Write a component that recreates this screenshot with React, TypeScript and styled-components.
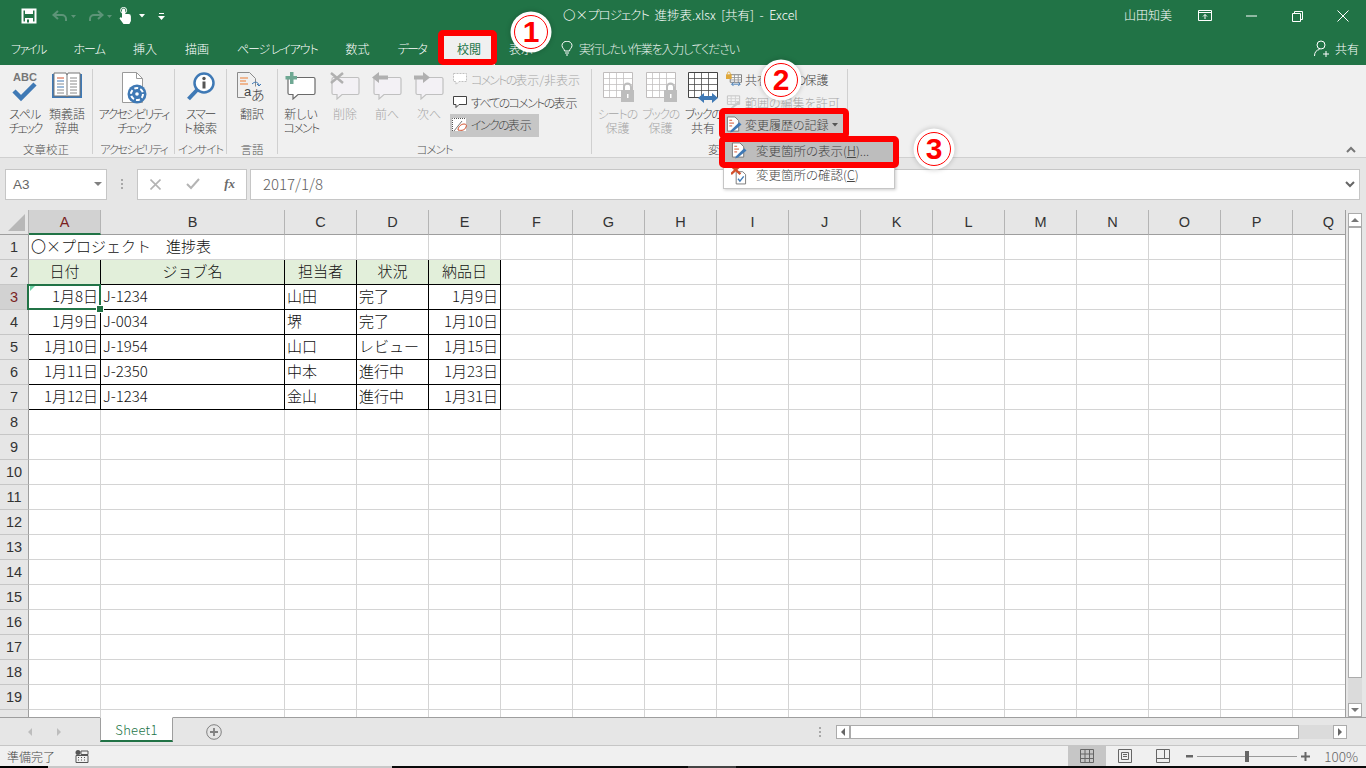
import React from 'react';
import styled, { createGlobalStyle } from 'styled-components';

const UI_FONT = '"Noto Sans CJK JP", "Noto Sans", sans-serif';

const GlobalStyle = createGlobalStyle`
  html, body {
    margin: 0;
    padding: 0;
    overflow: hidden;
    background: #f0f0f0;
  }
`;

const Window = styled.div`
  position: relative;
  display: flex;
  flex-direction: column;
  width: 1366px;
  height: 768px;
  overflow: hidden;
  font-family: ${UI_FONT};
  font-feature-settings: 'palt';
  font-weight: 300;
  font-size: 12px;
  color: #444;
`;

/* kana in the reference font is much narrower, this tightens a run of it */
const Fit = styled.span<{ $ls: number }>`
  letter-spacing: ${(p) => p.$ls}px;
`;

/* title bar */
const TitleBar = styled.div`
  display: flex;
  align-items: center;
  height: 32px;
  flex: none;
  background: #217346;
  color: #fff;
`;

const QuickAccess = styled.div`
  display: flex;
  align-items: center;
  padding-left: 21px;
  width: 563px;
  box-sizing: border-box;
`;

const QuickSlot = styled.span<{ $w: number }>`
  display: flex;
  align-items: center;
  width: ${(p) => p.$w}px;
`;

const TitleText = styled.div`
  flex: 1;
  padding-bottom: 3px;
  font-size: 12.5px;
  white-space: pre;
`;

const UserName = styled.div`
  padding-bottom: 3px;
  font-size: 12px;
  margin-right: 10px;
`;

const WinButton = styled.div`
  width: 46px;
  height: 32px;
  display: flex;
  align-items: center;
  justify-content: center;
`;

/* tabs */
const TabRow = styled.div`
  display: flex;
  align-items: center;
  height: 33px;
  flex: none;
  background: #217346;
  color: #fff;
  padding-left: 11px;
  gap: 28px;
`;

const Tab = styled.div<{ $active?: boolean; $ls?: number }>`
  line-height: 33px;
  white-space: nowrap;
  font-size: 12px;
  letter-spacing: ${(p) => p.$ls ?? 0}px;
  color: ${(p) => (p.$active ? '#217346' : '#fff')};
  ${(p) => p.$active && 'background: #f0f0f0; padding: 0 14px; margin: 0 -14px 0 -11px; font-weight: 400;'}
`;

const TellMe = styled.div`
  display: flex;
  align-items: center;
  gap: 6px;
  flex: 1;
  color: #e9f1ec;
  letter-spacing: -1.2px;
`;

const ShareButton = styled.div`
  display: flex;
  align-items: center;
  gap: 5px;
  padding-right: 7px;
`;

/* ribbon */
const Ribbon = styled.div`
  position: relative;
  display: flex;
  height: 93px;
  flex: none;
  background: #f0f0f0;
  border-bottom: 1px solid #d0d0d0;
  box-sizing: border-box;
`;

const Group = styled.div<{ $w: number }>`
  display: flex;
  flex-direction: column;
  width: ${(p) => p.$w}px;
  flex: none;
  height: 85px;
  margin-top: 4px;
  border-right: 1px solid #d0d0d0;
  box-sizing: border-box;
`;

const GroupBody = styled.div<{ $pad?: number }>`
  height: 71px;
  flex: none;
  display: flex;
  justify-content: ${(p) => (p.$pad !== undefined ? 'flex-start' : 'center')};
  padding-left: ${(p) => p.$pad ?? 0}px;
`;

const GroupLabel = styled.div`
  height: 14px;
  line-height: 18px;
  text-align: center;
  color: #555;
  font-size: 11.5px;
  white-space: nowrap;
`;

const BigButton = styled.div<{ $w: number; $off?: boolean }>`
  display: flex;
  flex-direction: column;
  align-items: center;
  width: ${(p) => p.$w}px;
  flex: none;
  color: ${(p) => (p.$off ? '#a6a6a6' : '#444')};
`;

const BigLabel = styled.div`
  font-size: 12px;
  line-height: 14px;
  text-align: center;
  white-space: pre;
`;

const IconSlot = styled.div`
  height: 38px;
  padding-top: 3px;
  display: flex;
  align-items: flex-start;
  justify-content: center;
  box-sizing: border-box;
  flex: none;
`;

const SmallColumn = styled.div`
  display: flex;
  flex-direction: column;
  align-items: flex-start;
  gap: 1px;
  flex: none;
`;

const SmallButton = styled.div<{ $off?: boolean; $on?: boolean }>`
  display: flex;
  align-items: center;
  gap: 3px;
  height: ${(p) => (p.$on ? 23 : 22)}px;
  ${(p) => p.$on && 'margin-top: -1px;'}
  padding: 0 7px 2px 2px;
  box-sizing: border-box;
  color: ${(p) => (p.$off ? '#a6a6a6' : '#444')};
  background: ${(p) => (p.$on ? '#c6c6c6' : 'transparent')};
  white-space: nowrap;
  font-size: 12px;
`;

const Collapse = styled.div`
  position: absolute;
  right: 10px;
  bottom: 4px;
  line-height: 0;
`;

/* formula bar */
const FormulaBar = styled.div`
  display: flex;
  align-items: center;
  height: 52px;
  flex: none;
  background: #e6e6e6;
  padding: 0 6px 0 5px;
  box-sizing: border-box;
`;

const FieldBox = styled.div<{ $w?: number; $ml?: number }>`
  display: flex;
  align-items: center;
  height: 31px;
  ${(p) => (p.$w ? `width: ${p.$w}px; flex: none;` : 'flex: 1;')}
  margin-left: ${(p) => p.$ml ?? 0}px;
  padding-right: 4px;
  background: #fff;
  border: 1px solid #c6c6c6;
  box-sizing: border-box;
  color: #666;
`;

const NameText = styled.div`
  flex: 1;
  padding-left: 7px;
  font-size: 13.5px;
  font-family: 'Liberation Sans', sans-serif;
`;

const FormulaText = styled.div`
  flex: 1;
  padding: 0 0 2px 12px;
  font-size: 15px;
  color: #5f5f5f;
`;

const Dots = styled.div`
  width: 30px;
  flex: none;
  display: flex;
  flex-direction: column;
  align-items: center;
  gap: 2px;
`;

const Dot = styled.i`
  width: 2px;
  height: 2px;
  background: #a8a8a8;
`;

const FxButtons = styled.div`
  display: flex;
  justify-content: space-between;
  align-items: center;
  flex: 1;
  padding: 0 7px 0 12px;
`;

const FxLabel = styled.span`
  font-family: 'Liberation Serif', serif;
  font-style: italic;
  font-weight: 700;
  font-size: 13px;
  color: #6a6a6a;
`;

/* sheet */
const SheetArea = styled.div`
  display: flex;
  height: 507px;
  flex: none;
  background: #e6e6e6;
  overflow: hidden;
`;

const GridClip = styled.div`
  width: 1346px;
  height: 507px;
  overflow: hidden;
  border-right: 1px solid #9e9e9e;
  box-sizing: border-box;
  flex: none;
`;

const Grid = styled.div`
  display: grid;
  grid-template-columns: 29px 72px 184px repeat(15, 72px);
  grid-auto-rows: 25px;
  width: max-content;
  background: #fff;
`;

const ColHead = styled.div<{ $sel?: boolean }>`
  display: flex;
  align-items: center;
  justify-content: center;
  background: ${(p) => (p.$sel ? '#d2d2d2' : '#e6e6e6')};
  border-bottom: ${(p) => (p.$sel ? '2px solid #217346' : '1px solid #9e9e9e')};
  border-right: 1px solid #b4b4b4;
  box-sizing: border-box;
  color: ${(p) => (p.$sel ? '#7a1f1f' : '#333')};
  font-family: 'Liberation Sans', sans-serif;
  font-size: 14.5px;
`;

const Corner = styled.div`
  background: #e6e6e6;
  border-bottom: 1px solid #9e9e9e;
  border-right: 1px solid #b4b4b4;
  box-sizing: border-box;
  position: relative;
`;

const CornerMark = styled.i`
  position: absolute;
  right: 3px;
  bottom: 3px;
  width: 0;
  height: 0;
  border-style: solid;
  border-width: 0 0 17px 17px;
  border-color: transparent transparent #b8b8b8 transparent;
`;

const RowHead = styled.div<{ $sel?: boolean }>`
  display: flex;
  align-items: center;
  justify-content: center;
  background: ${(p) => (p.$sel ? '#d2d2d2' : '#e6e6e6')};
  border-right: 1px solid #9e9e9e;
  border-bottom: 1px solid #c6c6c6;
  box-sizing: border-box;
  color: ${(p) => (p.$sel ? '#7a1f1f' : '#333')};
  font-family: 'Liberation Sans', sans-serif;
  font-size: 14.5px;
`;

const Cell = styled.div<{ $boxed?: boolean; $head?: boolean; $align?: string; $span?: number }>`
  position: relative;
  display: flex;
  align-items: center;
  justify-content: ${(p) => p.$align ?? 'flex-start'};
  grid-column: span ${(p) => p.$span ?? 1};
  padding: 0 2px 3px;
  box-sizing: border-box;
  white-space: nowrap;
  color: #111;
  font-size: 15px;
  font-feature-settings: normal;
  background: ${(p) => (p.$head ? '#e2efda' : '#fff')};
  border-right: 1px solid ${(p) => (p.$boxed ? '#000' : '#d4d4d4')};
  border-bottom: 1px solid ${(p) => (p.$boxed ? '#000' : '#d4d4d4')};
`;

const Cursor = styled.i`
  position: absolute;
  inset: -1px -1px -1px -2px;
  border: 2px solid #217346;
  pointer-events: none;
`;

const CursorHandle = styled.i`
  position: absolute;
  right: -4px;
  bottom: -4px;
  width: 6px;
  height: 6px;
  background: #217346;
  border: 1px solid #fff;
  z-index: 1;
`;

const ErrorMark = styled.i`
  position: absolute;
  left: 1px;
  top: 1px;
  border-style: solid;
  border-width: 5px 5px 0 0;
  border-color: #6fd3a6 transparent transparent transparent;
`;

const VScroll = styled.div`
  width: 14px;
  margin: 3px 0 0 2px;
  display: flex;
  flex-direction: column;
  flex: none;
  height: 504px;
  background: #dbdbdb;
`;

const ScrollBtn = styled.div`
  width: 14px;
  height: 14px;
  flex: none;
  display: flex;
  align-items: center;
  justify-content: center;
  background: #fff;
  border: 1px solid #ababab;
  box-sizing: border-box;
`;

const VThumb = styled.div`
  height: 451px;
  flex: none;
  background: #fff;
  border: 1px solid #ababab;
  box-sizing: border-box;
`;

const Spacer = styled.div`
  flex: 1;
`;

/* sheet tabs */
const TabBar = styled.div`
  display: flex;
  align-items: center;
  height: 29px;
  flex: none;
  background: #e6e6e6;
  border-top: 1px solid #9e9e9e;
  border-bottom: 1px solid #c6c6c6;
  box-sizing: border-box;
`;

const NavArrows = styled.div`
  display: flex;
  width: 100px;
  flex: none;
  padding-left: 26px;
  gap: 21px;
  box-sizing: border-box;
`;

const SheetTab = styled.div`
  width: 73px;
  height: 25px;
  margin-top: -1px;
  align-self: flex-start;
  flex: none;
  display: flex;
  align-items: center;
  justify-content: center;
  background: #fff;
  border: 1px solid #9e9e9e;
  border-top-color: #fff;
  border-bottom: 2px solid #217346;
  box-sizing: border-box;
  color: #217346;
  font-size: 13px;
  letter-spacing: 0.3px;
  font-feature-settings: normal;
`;

const AddSheet = styled.div`
  margin-left: 33px;
  line-height: 0;
`;

const TabDots = styled.div`
  margin-left: auto;
  width: 16px;
  display: flex;
  flex-direction: column;
  align-items: center;
  gap: 2px;
`;

const HScroll = styled.div`
  display: flex;
  width: 511px;
  height: 14px;
  margin: 0 19px 0 8px;
  flex: none;
  background: #dbdbdb;
`;

const HThumb = styled.div`
  width: 449px;
  flex: none;
  background: #fff;
  border: 1px solid #ababab;
  box-sizing: border-box;
`;

/* status bar */
const StatusBar = styled.div`
  display: flex;
  align-items: center;
  height: 20px;
  flex: none;
  background: #f0f0f0;
  padding-left: 7px;
  color: #444;
`;

const StatusIcon = styled.div`
  margin-left: 20px;
  line-height: 0;
`;

const ViewButtons = styled.div`
  display: flex;
  align-items: center;
  height: 100%;
  margin-left: auto;
`;

const ViewButton = styled.div<{ $on?: boolean }>`
  width: 38px;
  height: 100%;
  display: flex;
  align-items: center;
  justify-content: center;
  background: ${(p) => (p.$on ? '#c6c6c6' : 'transparent')};
`;

const Zoomer = styled.div`
  display: flex;
  align-items: center;
  margin-left: 4px;
  gap: 2px;
`;

const Slider = styled.div`
  position: relative;
  width: 100px;
  height: 1px;
  margin: 0 2px;
  background: #9a9a9a;
`;

const SliderThumb = styled.i`
  position: absolute;
  left: 48px;
  top: -5px;
  width: 4px;
  height: 11px;
  background: #666;
`;

const ZoomText = styled.div`
  width: 56px;
  padding-right: 8px;
  box-sizing: border-box;
  text-align: right;
  color: #666;
  font-size: 13.5px;
  font-feature-settings: normal;
`;

const BottomEdge = styled.div`
  display: flex;
  height: 2px;
  flex: none;
`;

const EdgePiece = styled.div<{ $w: number; $c: string }>`
  width: ${(p) => p.$w}px;
  background: ${(p) => p.$c};
`;

/* dropdown and annotations, laid over the window */
const Menu = styled.div`
  position: absolute;
  left: 723px;
  top: 137px;
  width: 172px;
  height: 52px;
  padding-top: 2px;
  box-sizing: border-box;
  background: #fff;
  border: 1px solid #c6c6c6;
  box-shadow: 1px 1px 3px rgba(0, 0, 0, 0.2);
  z-index: 2;
`;

const MenuItem = styled.div<{ $on?: boolean }>`
  display: flex;
  align-items: center;
  height: 23px;
  margin-bottom: 1px;
  padding: 0 0 2px 7px;
  gap: 9px;
  box-sizing: border-box;
  color: #444;
  background: ${(p) => (p.$on ? '#bdbdbd' : 'transparent')};
  white-space: nowrap;
  font-size: 12.5px;
`;

const MenuKey = styled.span`
  text-decoration: underline;
`;

const RedBox = styled.div<{ $l: number; $t: number; $w: number; $h: number }>`
  position: absolute;
  left: ${(p) => p.$l}px;
  top: ${(p) => p.$t}px;
  width: ${(p) => p.$w}px;
  height: ${(p) => p.$h}px;
  border: 6px solid #f00;
  border-radius: 5px;
  box-sizing: border-box;
  z-index: 3;
`;

const Callout = styled.div<{ $x: number; $y: number }>`
  position: absolute;
  left: ${(p) => p.$x - 17}px;
  top: ${(p) => p.$y - 17}px;
  width: 34px;
  height: 34px;
  display: flex;
  align-items: center;
  justify-content: center;
  box-sizing: border-box;
  border-radius: 50%;
  background: #fff;
  border: 1.5px solid #f00;
  box-shadow: 0 0 0 3.5px #fff, 0 0 5px 4px rgba(0, 0, 0, 0.18);
  color: #f00;
  font-family: 'Liberation Sans', sans-serif;
  font-weight: 700;
  font-size: 30px;
  line-height: 1;
  z-index: 4;
`;

/* icons */
const Save = () => (
  <svg width="16" height="16" viewBox="0 0 16 16">
    <path d="M1.5 1.5h13v13h-13z" fill="none" stroke="#fff" strokeWidth="2" />
    <path d="M4 1v5h8V1zM4 10h8v5H4z" fill="#fff" />
    <path d="M6 11.5h2v3H6z" fill="#217346" />
  </svg>
);

const Undo = ({ flip }: { flip?: boolean }) => (
  <svg width="26" height="14" viewBox="0 0 26 14">
    <g transform={flip ? 'translate(18 0) scale(-1 1)' : undefined}>
      <path d="M7 2 2.500 6 7 10M3 6h8a4 4 0 0 1 4 4v2" fill="none" stroke="#5d9478" strokeWidth="2" />
    </g>
    <path d="M20 6h5l-2.500 3z" fill="#5d9478" />
  </svg>
);

const Touch = () => (
  <svg width="14" height="18" viewBox="0 0 14 18">
    <path d="M4 8V3a1.600 1.600 0 0 1 3.200 0v4h3.300a2.400 2.400 0 0 1 2.400 2.400V14l-1.500 3H5.500L1.500 11.500 2.800 10 4 11z" fill="#fff" />
    <circle cx="5.600" cy="3.400" r="3" fill="none" stroke="#fff" />
  </svg>
);

const Caret = ({ c = '#fff' }: { c?: string }) => (
  <svg width="6" height="4" viewBox="0 0 6 4">
    <path d="M0 0h6L3 3.500z" fill={c} />
  </svg>
);

const Customize = () => (
  <svg width="7" height="7" viewBox="0 0 7 7">
    <path d="M1 0h5v1H1zM0 3h7L3.500 7z" fill="#fff" />
  </svg>
);

const RibbonDisplay = () => (
  <svg width="14" height="12" viewBox="0 0 14 12">
    <path d="M.5.5h13v10H.5zM.5 2.500h13M7 9V4.500M5 6.500l2-2 2 2" fill="none" stroke="#fff" />
  </svg>
);

const Minimize = () => (
  <svg width="11" height="2" viewBox="0 0 11 2">
    <path d="M0 1h11" stroke="#fff" />
  </svg>
);

const Restore = () => (
  <svg width="11" height="11" viewBox="0 0 11 11">
    <path d="M.5 2.500h8v8h-8zM2.500 2.500v-2h8v8h-2" fill="none" stroke="#fff" />
  </svg>
);

const Close = () => (
  <svg width="12" height="12" viewBox="0 0 12 12">
    <path d="M.5.5l11 11M11.500.5l-11 11" stroke="#fff" />
  </svg>
);

const Bulb = () => (
  <svg width="12" height="15" viewBox="0 0 12 15">
    <path d="M3.500 10c0-2-2.500-3-2.500-5.500a5 4.300 0 0 1 10 0C11 7 8.500 8 8.500 10zM4 12h4M5 14h2" fill="none" stroke="#fff" />
  </svg>
);

const Person = () => (
  <svg width="16" height="17" viewBox="0 0 16 17">
    <circle cx="7" cy="5" r="4" fill="none" stroke="#fff" />
    <path d="M.5 16c0-4 2-6 5-6.500M9 14h6M12 11v6" fill="none" stroke="#fff" />
  </svg>
);

const SpellIcon = () => (
  <svg width="28" height="34" viewBox="0 0 28 34">
    <text x="14" y="9" textAnchor="middle" fontSize="11" fontWeight="700" fontFamily="Liberation Sans" fill="#777">ABC</text>
    <path d="M3 19l7 7L24 12" fill="none" stroke="#3f79b5" strokeWidth="4.500" />
  </svg>
);

const BookIcon = () => (
  <svg width="32" height="28" viewBox="0 0 32 28">
    <path d="M1 2h30v24H1z" fill="#3f79b5" />
    <path d="M3 1h12l1 2 1-2h12v23H17l-1 1-1-1H3z" fill="#fff" stroke="#777" />
    <path d="M16 3v21" stroke="#777" />
    <path d="M6 6h7" stroke="#d2502d" />
    <path d="M6 9h7M6 15h7" stroke="#3f79b5" />
    <path d="M6 12h7M6 18h7M6 21h7M19 6h7M19 9h7M19 12h7M19 15h7M19 18h7M19 21h7" stroke="#8a8a8a" />
  </svg>
);

const AccessIcon = () => (
  <svg width="30" height="32" viewBox="0 0 30 32">
    <path d="M3.500.5h14l6 6v24h-20z" fill="#fff" stroke="#9a9a9a" />
    <path d="M17.500.5v6h6" fill="none" stroke="#9a9a9a" />
    <circle cx="18" cy="22" r="9.500" fill="#3f79b5" />
    <circle cx="18" cy="22" r="6" fill="none" stroke="#fff" strokeWidth="2" strokeDasharray="4 2.200" />
    <circle cx="18" cy="22" r="1.800" fill="#fff" />
  </svg>
);

const SmartIcon = () => (
  <svg width="30" height="30" viewBox="0 0 30 30">
    <circle cx="18" cy="11" r="9.500" fill="#fff" stroke="#3f79b5" strokeWidth="2.500" />
    <path d="M11 18 2.500 27" stroke="#3f79b5" strokeWidth="4" />
    <path d="M16.500 9.500h3v7h-3z" fill="#555" />
    <circle cx="18" cy="6.500" r="1.700" fill="#555" />
  </svg>
);

const TranslateIcon = () => (
  <svg width="32" height="33" viewBox="0 0 32 33">
    <path d="M1.500.5h12l6 6v8M1.500.5v25h8" fill="none" stroke="#8a8a8a" />
    <path d="M4 6h8M4 9h6M4 12h8" stroke="#ed7d31" />
    <path d="M16 12c3-3 6-2 7 1M21 12l2 2 2-2" fill="none" stroke="#3f79b5" />
    <text x="8" y="24" fontSize="13" fontFamily="Liberation Sans" fill="#444">a</text>
    <text x="15" y="28" fontSize="14" fontFamily="Noto Sans CJK JP" fill="#444">あ</text>
  </svg>
);

const Bubble = ({ off }: { off?: boolean }) => (
  <path
    d="M4.500 5.500h24a1.500 1.500 0 0 1 1.500 1.500v14a1.500 1.500 0 0 1-1.500 1.500H13l-5 4.500v-4.500H4.500A1.500 1.500 0 0 1 3 21V7a1.500 1.500 0 0 1 1.500-1.500z"
    fill={off ? '#f3f1f5' : '#fff'}
    stroke={off ? '#c0c0c0' : '#6a6a6a'}
    strokeWidth="1.200"
  />
);

const NewComment = () => (
  <svg width="32" height="28" viewBox="0 0 32 28">
    <Bubble />
    <path d="M5 0h3.500v4H12v3.500H8.500V12H5V7.500H.5V4H5z" fill="#6fa893" />
  </svg>
);

const DeleteComment = () => (
  <svg width="32" height="28" viewBox="0 0 32 28">
    <Bubble off />
    <path d="M2 1l12 10M14 1 2 11" stroke="#b0b0b0" strokeWidth="2.500" />
  </svg>
);

const PrevComment = () => (
  <svg width="32" height="28" viewBox="0 0 32 28">
    <Bubble off />
    <path d="M8 0 1 5.500 8 11V7.500h9v-4H8z" fill="#b0b0b0" />
  </svg>
);

const NextComment = () => (
  <svg width="32" height="28" viewBox="0 0 32 28">
    <Bubble off />
    <path d="M10 0l7 5.500L10 11V7.500H1v-4h9z" fill="#b0b0b0" />
  </svg>
);

const SmallBubble = ({ off }: { off?: boolean }) => (
  <svg width="16" height="14" viewBox="0 0 16 14">
    <path
      d="M1.500 1.500h13v8H7L4 12.500V9.500H1.500z"
      fill="#fff"
      stroke={off ? '#c0c0c0' : '#444'}
      strokeDasharray={off ? '2 1' : undefined}
    />
  </svg>
);

const InkIcon = () => (
  <svg width="16" height="14" viewBox="0 0 16 14">
    <path d="M0 0h14v13H0z" fill="#fff" />
    <path d="M.5 13V.5H14" fill="none" stroke="#555" strokeDasharray="1 1" />
    <path d="M2 13 10 3" stroke="#777" />
    <path d="M6 12c0-3 3-6 6-6 2 0 3 1 2 3-1 3-4 4-8 3z" fill="none" stroke="#d2502d" />
  </svg>
);

const SheetIcon = ({ off }: { off?: boolean }) => {
  const c = off ? '#c0bdbd' : '#444';
  return (
    <svg width="36" height="31" viewBox="0 0 36 31">
      <path d="M3.500.5h29v25h-29z" fill="#fff" stroke={c} />
      <path
        d="M3.500 6.500h29M3.500 12.500h29M3.500 18.500h29M9.500.5v25M16.500.5v25M23.500.5v25"
        fill="none"
        stroke={c}
        opacity=".75"
      />
      {off ? (
        <g>
          <path d="M21 18h13v12H21z" fill="#bdbdbd" />
          <path d="M24 18v-3a3.500 3.500 0 0 1 7 0v3" fill="none" stroke="#bdbdbd" strokeWidth="2" />
          <path d="M27 22h1.500v4H27z" fill="#fff" />
        </g>
      ) : (
        <path d="M13 26l6-5v3h8v-3l6 5-6 5v-3h-8v3z" fill="#3f79b5" />
      )}
    </svg>
  );
};

const ShareProtect = () => (
  <svg width="16" height="16" viewBox="0 0 17 16">
    <path d="M4.500 3.500h12v8h-12z" fill="#fff" stroke="#777" />
    <path d="M4.500 6.500h12M4.500 9h12M9 3.500v8M13 3.500v8" stroke="#999" />
    <path d="M0 3h6v5H0z" fill="#e0a83a" />
    <path d="M1.500 3V2a1.500 1.500 0 0 1 3 0v1" fill="none" stroke="#e0a83a" />
    <path d="M6 13.500h9M6 13.500l2-2M6 13.500l2 2M15 13.500l-2-2M15 13.500l-2 2" fill="none" stroke="#3f79b5" />
  </svg>
);

const RangeIcon = () => (
  <svg width="16" height="16" viewBox="0 0 17 16">
    <path d="M1.500 1.500h13v9h-13z" fill="#f4f4f4" stroke="#c0c0c0" />
    <path d="M1.500 4.500h13M1.500 7.500h13M5.500 1.500v9M10 1.500v9" stroke="#d0d0d0" />
    <path d="M5 14l8-7 2 2-8 6z" fill="#c8c8c8" />
  </svg>
);

const TrackIcon = () => (
  <svg width="16" height="17" viewBox="0 0 17 17">
    <path d="M1.500.5h8l4 4v11h-12z" fill="#fff" stroke="#777" />
    <path d="M3.500 4h3M3.500 7h5M3.500 10h3" stroke="#d2502d" />
    <path d="M5 15l9-9 2.500 2.500-9 7.500-3 1z" fill="#3f79b5" />
  </svg>
);

const ReviewIcon = () => (
  <svg width="16" height="20" viewBox="0 0 17 20">
    <path d="M5.500 6.500h7l3 3v10h-10z" fill="#fff" stroke="#777" />
    <path d="M7.500 14l2 2.500 4-5" fill="none" stroke="#3f79b5" strokeWidth="1.500" />
    <path d="M0 0l10 9M10 0 0 9" stroke="#d2502d" strokeWidth="2.500" />
  </svg>
);

const ChevronUp = () => (
  <svg width="10" height="7" viewBox="0 0 10 7">
    <path d="M1 6l4-4 4 4" fill="none" stroke="#777" strokeWidth="2" />
  </svg>
);

const ChevronDown = () => (
  <svg width="10" height="7" viewBox="0 0 10 7">
    <path d="M1 1l4 4 4-4" fill="none" stroke="#666" strokeWidth="2" />
  </svg>
);

const Cross = () => (
  <svg width="11" height="11" viewBox="0 0 11 11">
    <path d="M.5.5l10 10M10.500.5l-10 10" stroke="#b4b4b4" strokeWidth="1.600" />
  </svg>
);

const Check = () => (
  <svg width="14" height="12" viewBox="0 0 14 12">
    <path d="M1 6l4 4 8-9" fill="none" stroke="#b4b4b4" strokeWidth="2" />
  </svg>
);

const Tri = ({ dir, c = '#777' }: { dir: 'u' | 'd' | 'l' | 'r'; c?: string }) => {
  const d = { u: 'M0 6 4 2l4 4z', d: 'M0 2h8L4 6z', l: 'M6 0v8L2 4z', r: 'M2 0v8l4-4z' }[dir];
  return (
    <svg width="8" height="8" viewBox="0 0 8 8">
      <path d={d} fill={c} />
    </svg>
  );
};

const PlusCircle = () => (
  <svg width="16" height="16" viewBox="0 0 16 16">
    <circle cx="8" cy="8" r="7.300" fill="none" stroke="#808080" />
    <path d="M8 4v8M4 8h8" stroke="#808080" strokeWidth="1.800" />
  </svg>
);

const MacroIcon = () => (
  <svg width="14" height="13" viewBox="0 0 14 13">
    <circle cx="3" cy="2.500" r="2.500" fill="#555" />
    <path d="M1 5.500h12v7H1zM6 1h7v3.500H6z" fill="none" stroke="#555" />
    <path d="M3 7.500h1M6 7.500h1M9 7.500h1M3 10h1M6 10h1M9 10h1" stroke="#555" />
  </svg>
);

const NormalView = () => (
  <svg width="14" height="14" viewBox="0 0 14 14">
    <path d="M.5.5h13v13H.5zM.5 5h13M.5 9.500h13M5 .5v13M9.500.5v13" fill="none" stroke="#666" />
  </svg>
);

const PageView = () => (
  <svg width="14" height="14" viewBox="0 0 14 14">
    <path d="M.5.5h13v13H.5zM3.500 3.500h7v7h-7zM5 5.500h4M5 7.500h4" fill="none" stroke="#666" />
  </svg>
);

const BreakView = () => (
  <svg width="14" height="14" viewBox="0 0 14 14">
    <path d="M.5.5h13v13H.5zM.5 9.500h13M8.500.5v9" fill="none" stroke="#666" />
  </svg>
);

const Minus = () => (
  <svg width="7" height="3" viewBox="0 0 7 3">
    <path d="M0 0h7v2.500H0z" fill="#666" />
  </svg>
);

const Plus = () => (
  <svg width="9" height="9" viewBox="0 0 9 9">
    <path d="M3.500 0H5.500v3.500H9v2H5.500V9h-2V5.500H0v-2h3.500z" fill="#666" />
  </svg>
);

/* sheet data */
const COLUMNS = 'ABCDEFGHIJKLMNOPQ'.split('');

type Align = 'flex-start' | 'center' | 'flex-end';
const TABLE_ALIGN: Align[] = ['flex-end', 'flex-start', 'flex-start', 'flex-start', 'flex-end'];

const TABLE_HEAD = ['日付', 'ジョブ名', '担当者', '状況', '納品日'];
const TABLE_ROWS = [
  ['1月8日', 'J-1234', '山田', '完了', '1月9日'],
  ['1月9日', 'J-0034', '堺', '完了', '1月10日'],
  ['1月10日', 'J-1954', '山口', 'レビュー', '1月15日'],
  ['1月11日', 'J-2350', '中本', '進行中', '1月23日'],
  ['1月12日', 'J-1234', '金山', '進行中', '1月31日'],
];

const renderCell = (row: number, col: number) => {
  const key = `${row}-${col}`;
  if (row === 1 && col === 0) {
    return <Cell key={key} $span={2}>〇×プロジェクト　進捗表</Cell>;
  }
  if (row === 1 && col === 1) return null;
  if (row === 2 && col < 5) {
    return (
      <Cell key={key} $boxed $head $align="center">
        {TABLE_HEAD[col]}
      </Cell>
    );
  }
  if (row >= 3 && row <= 7 && col < 5) {
    return (
      <Cell key={key} $boxed $align={TABLE_ALIGN[col]}>
        {TABLE_ROWS[row - 3][col]}
        {row === 3 && col === 0 && (
          <>
            <ErrorMark />
            <Cursor />
            <CursorHandle />
          </>
        )}
      </Cell>
    );
  }
  return <Cell key={key} />;
};

const renderRows = () => {
  const out: React.ReactNode[] = [];
  for (let row = 1; row <= 20; row++) {
    out.push(
      <RowHead key={`r${row}`} $sel={row === 3}>
        {row}
      </RowHead>
    );
    COLUMNS.forEach((_, col) => out.push(renderCell(row, col)));
  }
  return out;
};

function App() {
  return (
    <Window>
      <GlobalStyle />
      <TitleBar>
        <QuickAccess>
          <QuickSlot $w={30}><Save /></QuickSlot>
          <QuickSlot $w={36}><Undo /></QuickSlot>
          <QuickSlot $w={31}><Undo flip /></QuickSlot>
          <QuickSlot $w={21}><Touch /></QuickSlot>
          <QuickSlot $w={19}><Caret /></QuickSlot>
          <QuickSlot $w={10}><Customize /></QuickSlot>
        </QuickAccess>
        <TitleText>〇×<Fit $ls={-1}>プロジェクト</Fit>  進捗表.xlsx  [共有]  -  Excel</TitleText>
        <UserName>山田知美</UserName>
        <WinButton><RibbonDisplay /></WinButton>
        <WinButton><Minimize /></WinButton>
        <WinButton><Restore /></WinButton>
        <WinButton><Close /></WinButton>
      </TitleBar>

      <TabRow>
        <Tab $ls={-1.75}>ファイル</Tab>
        <Tab $ls={-1}>ホーム</Tab>
        <Tab>挿入</Tab>
        <Tab>描画</Tab>
        <Tab $ls={-1.1}>ページ レイアウト</Tab>
        <Tab>数式</Tab>
        <Tab $ls={-1.7}>データ</Tab>
        <Tab $active>校閲</Tab>
        <Tab>表示</Tab>
        <TellMe>
          <Bulb />
          <span>実行したい作業を入力してください</span>
        </TellMe>
        <ShareButton>
          <Person />
          <span>共有</span>
        </ShareButton>
      </TabRow>

      <Ribbon>
        <Group $w={93}>
          <GroupBody>
            <BigButton $w={42}>
              <IconSlot><SpellIcon /></IconSlot>
              <BigLabel><Fit $ls={-0.6}>スペル</Fit>{'\n'}<Fit $ls={-2.2}>チェック</Fit></BigLabel>
            </BigButton>
            <BigButton $w={42}>
              <IconSlot><BookIcon /></IconSlot>
              <BigLabel>{'類義語\n辞典'}</BigLabel>
            </BigButton>
          </GroupBody>
          <GroupLabel>文章校正</GroupLabel>
        </Group>
        <Group $w={82}>
          <GroupBody>
            <BigButton $w={78}>
              <IconSlot><AccessIcon /></IconSlot>
              <BigLabel><Fit $ls={-1.75}>アクセシビリティ</Fit>{'\n'}<Fit $ls={-2.2}>チェック</Fit></BigLabel>
            </BigButton>
          </GroupBody>
          <GroupLabel><Fit $ls={-1.75}>アクセシビリティ</Fit></GroupLabel>
        </Group>
        <Group $w={52}>
          <GroupBody>
            <BigButton $w={48}>
              <IconSlot><SmartIcon /></IconSlot>
              <BigLabel><Fit $ls={-1.3}>スマー</Fit>{'\n'}ト検索</BigLabel>
            </BigButton>
          </GroupBody>
          <GroupLabel><Fit $ls={-1}>インサイト</Fit></GroupLabel>
        </Group>
        <Group $w={51}>
          <GroupBody>
            <BigButton $w={48}>
              <IconSlot><TranslateIcon /></IconSlot>
              <BigLabel>翻訳</BigLabel>
            </BigButton>
          </GroupBody>
          <GroupLabel>言語</GroupLabel>
        </Group>
        <Group $w={314}>
          <GroupBody $pad={0}>
            <BigButton $w={46}>
              <IconSlot><NewComment /></IconSlot>
              <BigLabel>新しい{'\n'}<Fit $ls={-1.7}>コメント</Fit></BigLabel>
            </BigButton>
            <BigButton $w={42} $off>
              <IconSlot><DeleteComment /></IconSlot>
              <BigLabel>削除</BigLabel>
            </BigButton>
            <BigButton $w={42} $off>
              <IconSlot><PrevComment /></IconSlot>
              <BigLabel>前へ</BigLabel>
            </BigButton>
            <BigButton $w={42} $off>
              <IconSlot><NextComment /></IconSlot>
              <BigLabel>次へ</BigLabel>
            </BigButton>
            <SmallColumn>
              <SmallButton $off><SmallBubble off /><span><Fit $ls={-1.8}>コメントの</Fit>表示/非表示</span></SmallButton>
              <SmallButton><SmallBubble /><span><Fit $ls={-1.7}>すべてのコメントの</Fit>表示</span></SmallButton>
              <SmallButton $on><InkIcon /><span><Fit $ls={-1.7}>インクの</Fit>表示</span></SmallButton>
            </SmallColumn>
          </GroupBody>
          <GroupLabel><Fit $ls={-1}>コメント</Fit></GroupLabel>
        </Group>
        <Group $w={256}>
          <GroupBody $pad={4}>
            <BigButton $w={43} $off>
              <IconSlot><SheetIcon off /></IconSlot>
              <BigLabel><Fit $ls={-1}>シートの</Fit>{'\n'}保護</BigLabel>
            </BigButton>
            <BigButton $w={43} $off>
              <IconSlot><SheetIcon off /></IconSlot>
              <BigLabel><Fit $ls={-1.5}>ブックの</Fit>{'\n'}保護</BigLabel>
            </BigButton>
            <BigButton $w={42}>
              <IconSlot><SheetIcon /></IconSlot>
              <BigLabel><Fit $ls={-1.5}>ブックの</Fit>{'\n'}共有</BigLabel>
            </BigButton>
            <SmallColumn>
              <SmallButton><ShareProtect /><span>共有<Fit $ls={-1.7}>ブックの</Fit>保護</span></SmallButton>
              <SmallButton $off><RangeIcon /><span>範囲の編集を許可</span></SmallButton>
              <SmallButton $on><TrackIcon /><span>変更履歴の記録</span><Caret c="#555" /></SmallButton>
            </SmallColumn>
          </GroupBody>
          <GroupLabel>変更</GroupLabel>
        </Group>
        <Collapse><ChevronUp /></Collapse>
      </Ribbon>

      <FormulaBar>
        <FieldBox $w={102}>
          <NameText>A3</NameText>
          <Tri dir="d" c="#808080" />
        </FieldBox>
        <Dots><Dot /><Dot /><Dot /></Dots>
        <FieldBox $w={110}>
          <FxButtons>
            <Cross />
            <Check />
            <FxLabel>fx</FxLabel>
          </FxButtons>
        </FieldBox>
        <FieldBox $ml={3}>
          <FormulaText>2017/1/8</FormulaText>
          <ChevronDown />
        </FieldBox>
      </FormulaBar>

      <SheetArea>
        <GridClip>
          <Grid>
            <Corner><CornerMark /></Corner>
            {COLUMNS.map((c, i) => (
              <ColHead key={c} $sel={i === 0}>{c}</ColHead>
            ))}
            {renderRows()}
          </Grid>
        </GridClip>
        <VScroll>
          <ScrollBtn><Tri dir="u" /></ScrollBtn>
          <VThumb />
          <Spacer />
          <ScrollBtn><Tri dir="d" /></ScrollBtn>
        </VScroll>
      </SheetArea>

      <TabBar>
        <NavArrows>
          <Tri dir="l" c="#bdbdbd" />
          <Tri dir="r" c="#bdbdbd" />
        </NavArrows>
        <SheetTab>Sheet1</SheetTab>
        <AddSheet><PlusCircle /></AddSheet>
        <TabDots><Dot /><Dot /><Dot /></TabDots>
        <HScroll>
          <ScrollBtn><Tri dir="l" c="#666" /></ScrollBtn>
          <HThumb />
          <Spacer />
          <ScrollBtn><Tri dir="r" c="#666" /></ScrollBtn>
        </HScroll>
      </TabBar>

      <StatusBar>
        <span>準備完了</span>
        <StatusIcon><MacroIcon /></StatusIcon>
        <ViewButtons>
          <ViewButton $on><NormalView /></ViewButton>
          <ViewButton><PageView /></ViewButton>
          <ViewButton><BreakView /></ViewButton>
          <Zoomer>
            <Minus />
            <Slider><SliderThumb /></Slider>
            <Plus />
          </Zoomer>
          <ZoomText>100%</ZoomText>
        </ViewButtons>
      </StatusBar>
      <BottomEdge>
        <EdgePiece $w={48} $c="#000" />
        <EdgePiece $w={344} $c="#c8c8c8" />
        <EdgePiece $w={296} $c="#0a0a0a" />
        <EdgePiece $w={48} $c="#444" />
        <EdgePiece $w={630} $c="#0a0a0a" />
      </BottomEdge>

      <Menu>
        <MenuItem $on><TrackIcon /><span>変更箇所の表示(<MenuKey>H</MenuKey>)...</span></MenuItem>
        <MenuItem><ReviewIcon /><span>変更箇所の確認(<MenuKey>C</MenuKey>)</span></MenuItem>
      </Menu>

      <RedBox $l={438} $t={30} $w={59} $h={35} />
      <RedBox $l={719} $t={108} $w={130} $h={31} />
      <RedBox $l={719} $t={136} $w={180} $h={32} />
      <Callout $x={531} $y={32}>1</Callout>
      <Callout $x={781} $y={80}>2</Callout>
      <Callout $x={934} $y={149}>3</Callout>
    </Window>
  );
}

export default App;
